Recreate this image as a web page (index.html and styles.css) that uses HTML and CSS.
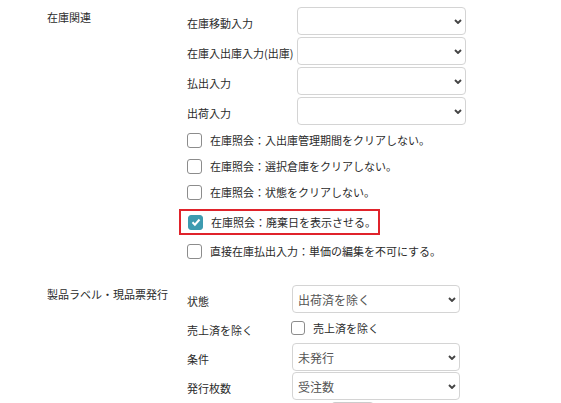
FILE: index.html
```html
<!DOCTYPE html>
<html lang="ja">
<head>
    <meta charset="UTF-8">
    <title>設定</title>
    <link rel="stylesheet" href="styles.css">
</head>
<body>
    <div class="page">
        <!-- 在庫関連 -->
        <section class="group group-stock">
            <div class="group-title">在庫関連</div>
            <div class="group-body">
                <div class="field">
                    <span class="field-label">在庫移動入力</span>
                    <div class="select-wrap">
                        <select class="select"><option></option></select>
                        <svg class="chevron" viewBox="0 0 8 5"><path d="M1 1l3 3 3-3" /></svg>
                    </div>
                </div>
                <div class="field">
                    <span class="field-label">在庫入出庫入力(出庫)</span>
                    <div class="select-wrap">
                        <select class="select"><option></option></select>
                        <svg class="chevron" viewBox="0 0 8 5"><path d="M1 1l3 3 3-3" /></svg>
                    </div>
                </div>
                <div class="field">
                    <span class="field-label">払出入力</span>
                    <div class="select-wrap">
                        <select class="select"><option></option></select>
                        <svg class="chevron" viewBox="0 0 8 5"><path d="M1 1l3 3 3-3" /></svg>
                    </div>
                </div>
                <div class="field">
                    <span class="field-label">出荷入力</span>
                    <div class="select-wrap">
                        <select class="select"><option></option></select>
                        <svg class="chevron" viewBox="0 0 8 5"><path d="M1 1l3 3 3-3" /></svg>
                    </div>
                </div>

                <label class="check-row">
                    <span class="checkbox"></span>
                    在庫照会：入出庫管理期間をクリアしない。
                </label>
                <label class="check-row">
                    <span class="checkbox"></span>
                    在庫照会：選択倉庫をクリアしない。
                </label>
                <label class="check-row">
                    <span class="checkbox"></span>
                    在庫照会：状態をクリアしない。
                </label>
                <label class="check-row is-marked">
                    <span class="checkbox is-checked">
                        <svg viewBox="0 0 12 12"><path d="M2.5 6.3l2.4 2.4 4.6-5.2" /></svg>
                    </span>
                    在庫照会：廃棄日を表示させる。
                </label>
                <label class="check-row">
                    <span class="checkbox"></span>
                    直接在庫払出入力：単価の編集を不可にする。
                </label>
            </div>
        </section>

        <!-- 製品ラベル・現品票発行 -->
        <section class="group group-label">
            <div class="group-title">製品ラベル・現品票発行</div>
            <div class="group-body">
                <div class="field">
                    <span class="field-label">状態</span>
                    <div class="select-wrap">
                        <select class="select"><option>出荷済を除く</option></select>
                        <svg class="chevron" viewBox="0 0 8 5"><path d="M1 1l3 3 3-3" /></svg>
                    </div>
                </div>
                <div class="field field-check">
                    <span class="field-label">売上済を除く</span>
                    <label class="check-inline">
                        <span class="checkbox"></span>
                        売上済を除く
                    </label>
                </div>
                <div class="field">
                    <span class="field-label">条件</span>
                    <div class="select-wrap">
                        <select class="select"><option>未発行</option></select>
                        <svg class="chevron" viewBox="0 0 8 5"><path d="M1 1l3 3 3-3" /></svg>
                    </div>
                </div>
                <div class="field field-tight">
                    <span class="field-label">発行枚数</span>
                    <div class="select-wrap">
                        <select class="select"><option>受注数</option></select>
                        <svg class="chevron" viewBox="0 0 8 5"><path d="M1 1l3 3 3-3" /></svg>
                    </div>
                </div>
                <div class="button-stub"></div>
            </div>
        </section>
    </div>
</body>
</html>
```

FILE: styles.css
```css
body {
    margin: 0;
    background: #ffffff;
    color: #2b2b2b;
    font-family: "Noto Sans CJK JP", "Noto Sans", sans-serif;
    font-size: 11px;
    overflow: hidden;
}

.page {
    padding: 7px 0 0 47px;
}

/* Groups */
.group {
    display: flex;
}

.group-title {
    width: 140px;
    flex-shrink: 0;
    line-height: 16px;
    margin-top: 2px;
    white-space: nowrap;
}

.group-body {
    display: flex;
    flex-direction: column;
    align-items: flex-start;
}

.group-label {
    margin-top: 21px;
}

.group-label .group-title {
    margin-top: 1px;
}

/* Select rows */
.field {
    display: flex;
    align-items: center;
    height: 28px;
    margin-bottom: 2px;
}

.field-label {
    width: 110px;
    flex-shrink: 0;
    padding-top: 3px;
    line-height: 16px;
    white-space: nowrap;
}

.group-label .field-label {
    width: 105px;
}

.select-wrap {
    position: relative;
    width: 169px;
    height: 28px;
}

.group-label .select-wrap {
    width: 168px;
}

.select {
    appearance: none;
    -webkit-appearance: none;
    width: 100%;
    height: 100%;
    box-sizing: border-box;
    border: 1px solid #d4d4d4;
    border-radius: 4px;
    background: #ffffff;
    padding: 0 20px 0 5px;
    font-family: inherit;
    font-size: 12px;
    color: #555555;
}

.chevron {
    position: absolute;
    right: 4px;
    top: 12px;
    width: 8px;
    height: 5px;
    fill: none;
    stroke: #444444;
    stroke-width: 1.9;
}

/* Checkbox rows */
.check-row {
    display: flex;
    align-items: center;
    height: 26px;
    white-space: nowrap;
}

.check-row .checkbox {
    margin-right: 8px;
}

.checkbox {
    width: 15px;
    height: 15px;
    box-sizing: border-box;
    border: 1.5px solid #8c8c8c;
    border-radius: 3px;
    background: #ffffff;
    display: flex;
    align-items: center;
    justify-content: center;
    flex-shrink: 0;
}

.checkbox.is-checked {
    background: #3d9bb0;
    border-color: #3d9bb0;
}

.checkbox svg {
    width: 12px;
    height: 12px;
    fill: none;
    stroke: #ffffff;
    stroke-width: 2;
}

.check-row.is-marked {
    height: 22px;
    width: 190px;
    margin: 4px 0 3px -8px;
    padding-left: 7px;
    border: 2px solid #e0232b;
}

.field-check {
    height: 26px;
}

.check-inline {
    display: flex;
    align-items: center;
    gap: 8px;
    margin-left: -1px;
    white-space: nowrap;
}

.check-inline .checkbox {
    width: 14px;
    height: 14px;
}

.field-tight {
    margin-top: -1px;
}

.button-stub {
    width: 39px;
    height: 8px;
    margin: 0 0 0 145px;
    border: 1px solid #cccccc;
    border-bottom: none;
    border-radius: 3px 3px 0 0;
}
```
